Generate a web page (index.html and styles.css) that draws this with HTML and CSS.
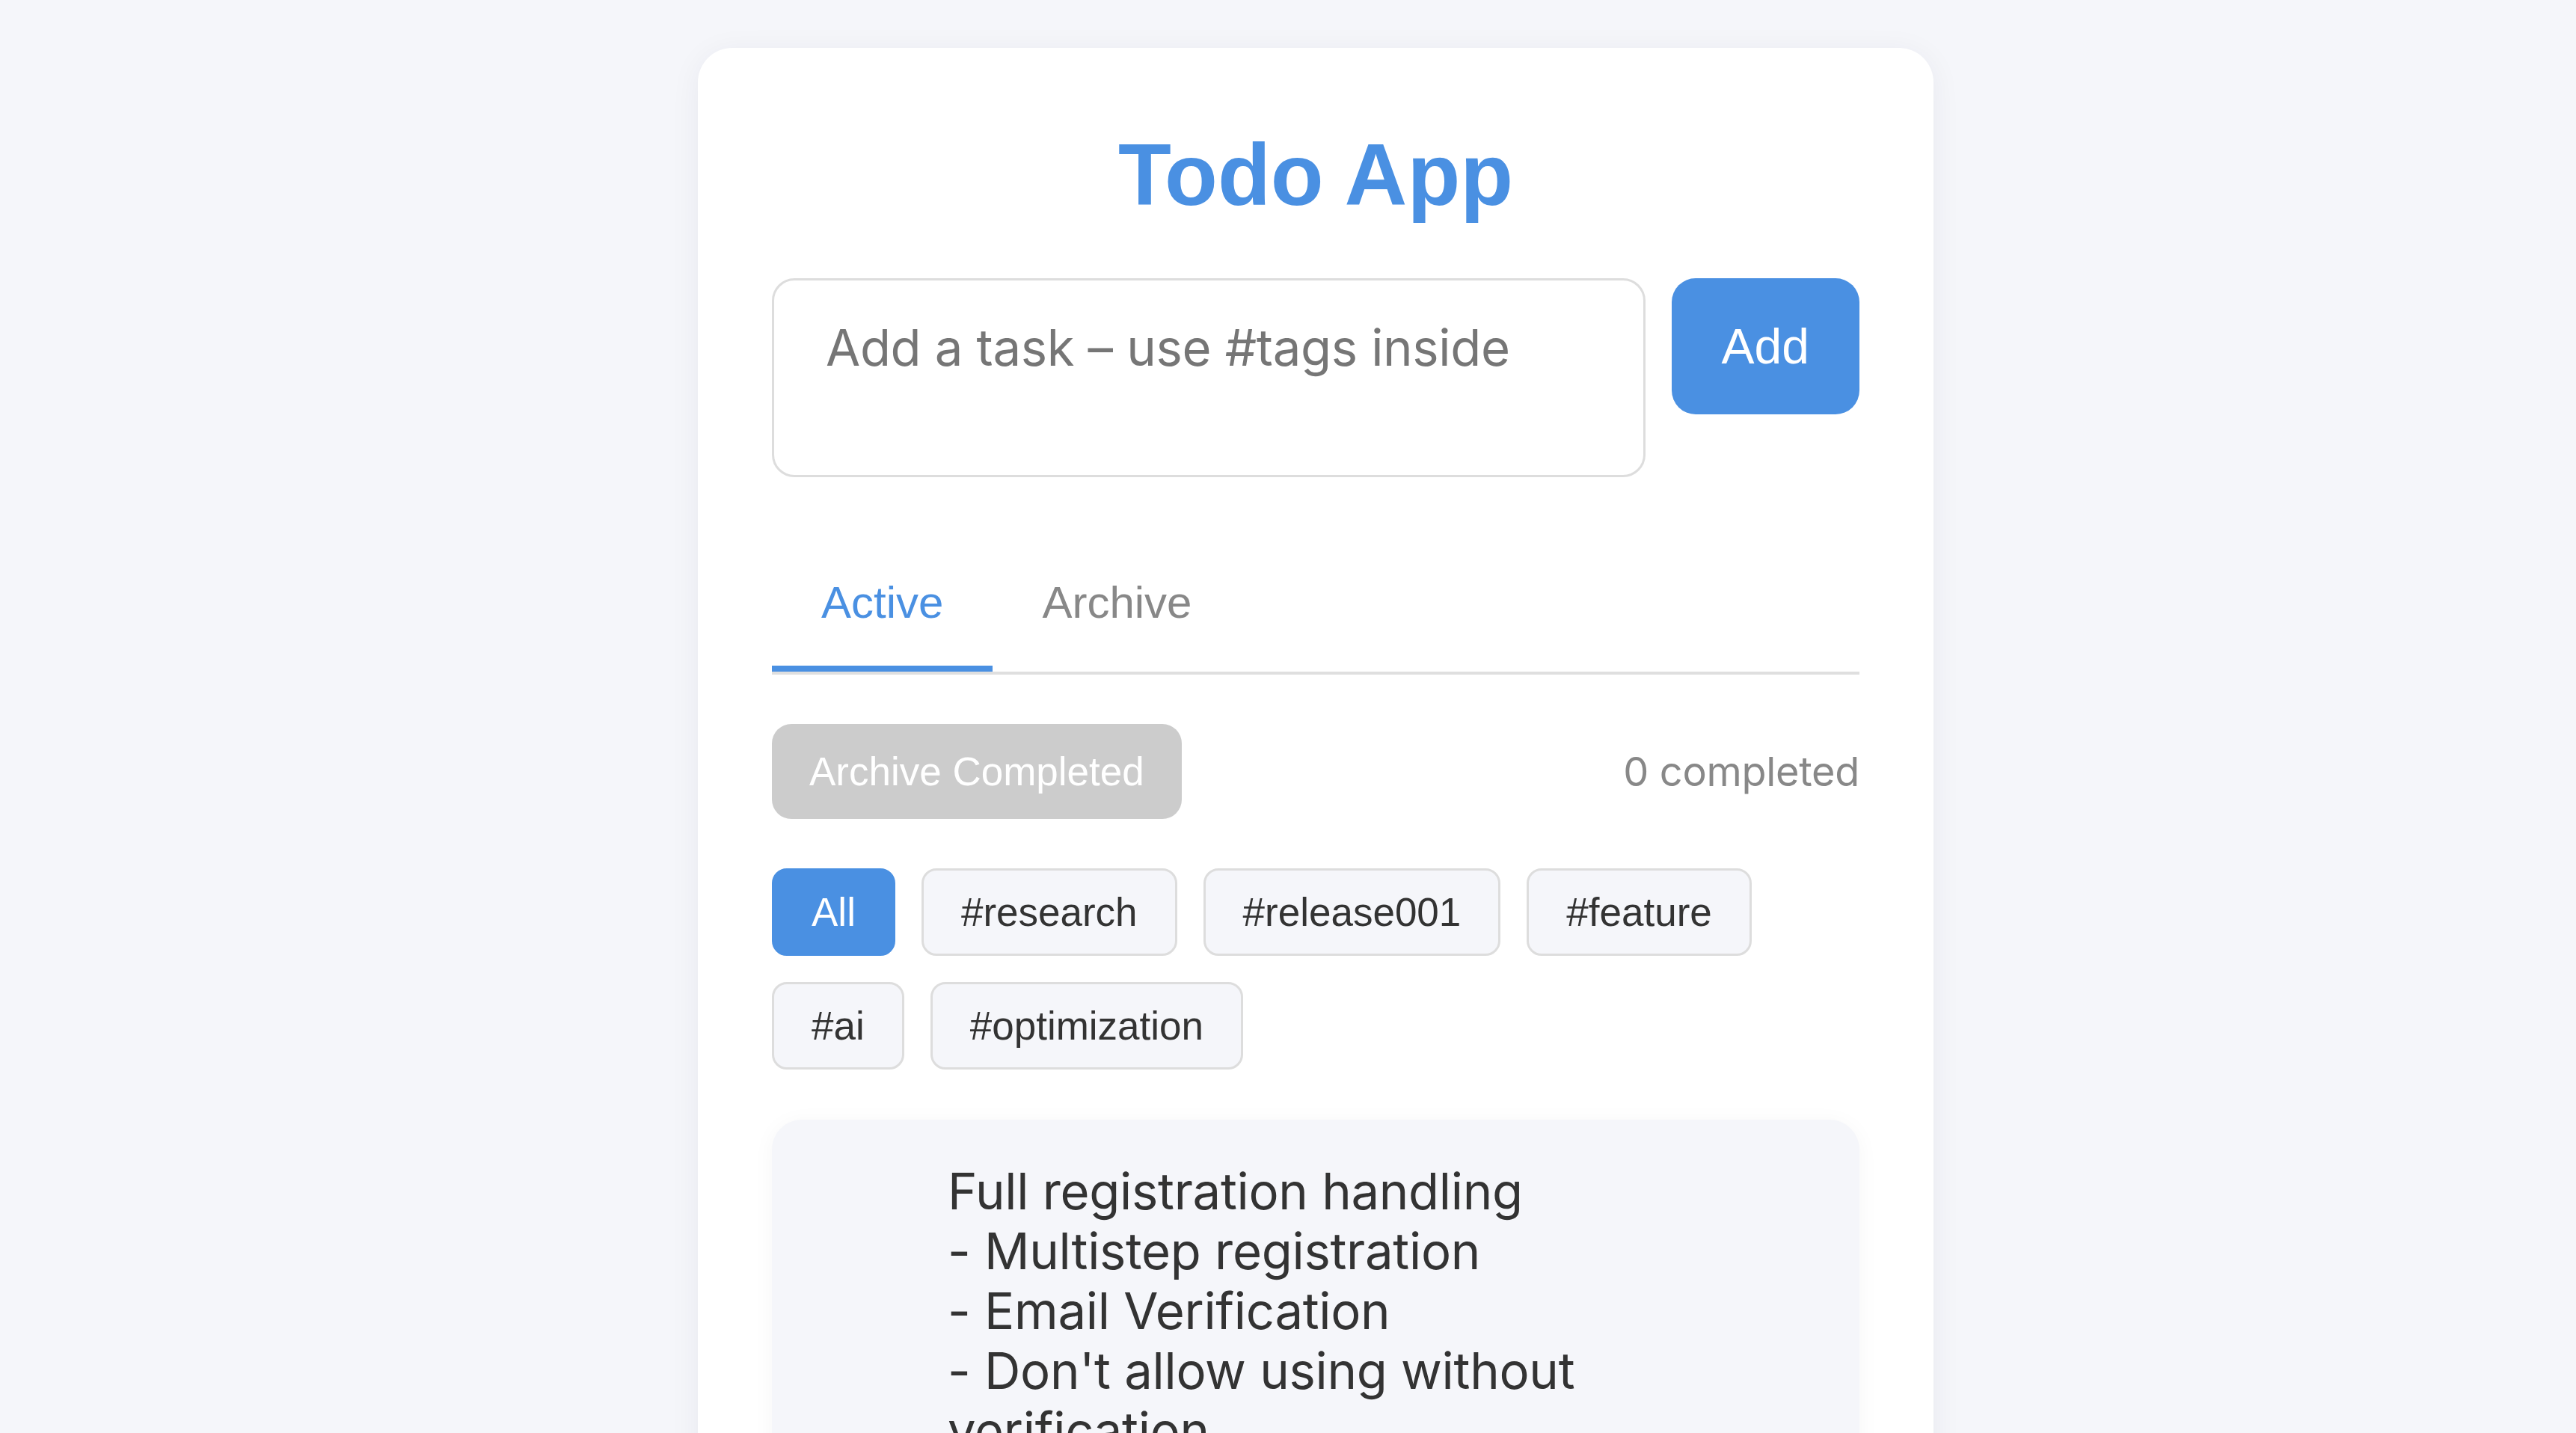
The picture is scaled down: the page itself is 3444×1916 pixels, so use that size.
FILE: index.html
```html
<!DOCTYPE html>
<html lang="en">
<head>
<meta charset="utf-8">
<title>Todo App</title>
<link rel="stylesheet" href="styles.css">
</head>
<body>
<main class="app">
  <h1 class="app-title">Todo App</h1>
  <div class="composer">
    <textarea class="composer-input" placeholder="Add a task – use #tags inside"></textarea>
    <button class="btn-add">Add</button>
  </div>
  <nav class="tabs">
    <button class="tab tab-active">Active</button>
    <button class="tab">Archive</button>
  </nav>
  <div class="toolbar">
    <button class="btn-archive" disabled>Archive Completed</button>
    <span class="count">0 completed</span>
  </div>
  <div class="tag-filter">
    <button class="tag tag-active">All</button>
    <button class="tag">#research</button>
    <button class="tag">#release001</button>
    <button class="tag">#feature</button>
    <button class="tag">#ai</button>
    <button class="tag">#optimization</button>
  </div>
  <ul class="task-list">
    <li class="task">
      <div class="task-text">Full registration handling
- Multistep registration
- Email Verification
- Don't allow using without verification</div>
    </li>
  </ul>
</main>
</body>
</html>
```
FILE: styles.css
```css
* {
  box-sizing: border-box;
}

body {
  margin: 0;
  padding-left: 74px;
  background: #f5f6fa;
  font-family: "Liberation Sans", Arial, sans-serif;
  color: #333;
}

.app {
  width: 1652px;
  margin: 64px auto;
  padding: 99px;
  background: #fff;
  border-radius: 46px;
  box-shadow: 0 6px 40px rgba(20, 30, 60, 0.06);
}

.app-title {
  margin: 4px 0 71px;
  text-align: center;
  font-size: 116px;
  font-weight: 700;
  line-height: normal;
  color: #4a90e2;
}

.composer {
  display: flex;
  align-items: flex-start;
  gap: 35px;
}

.composer-input {
  flex: 1;
  height: 266px;
  padding: 49px 69px;
  border: 3px solid #dddddd;
  border-radius: 30px;
  font-family: "Inter", "Noto Sans", sans-serif;
  font-size: 67px;
  letter-spacing: -0.35px;
  color: #333;
  resize: none;
  outline: none;
  background: #fff;
}

.composer-input::placeholder {
  color: #767676;
}

.btn-add {
  height: 182px;
  padding: 0 67px;
  border: none;
  border-radius: 32px;
  background: #4a90e2;
  color: #fff;
  font-family: inherit;
  font-size: 66px;
}

.tabs {
  display: flex;
  margin-top: 83px;
  border-bottom: 4px solid #dfdfdf;
}

.tab {
  padding: 50px 66px;
  border: none;
  border-bottom: 8px solid transparent;
  background: none;
  font-family: inherit;
  font-size: 60px;
  line-height: normal;
  color: #888;
}

.tab-active {
  color: #4a90e2;
  border-bottom-color: #4a90e2;
}

.toolbar {
  display: flex;
  justify-content: space-between;
  align-items: center;
  margin-top: 66px;
}

.btn-archive {
  padding: 33px 50px;
  border: none;
  border-radius: 26px;
  background: #cccccc;
  color: #fff;
  font-family: inherit;
  font-size: 53px;
  line-height: normal;
}

.count {
  font-family: "Inter", "Noto Sans", sans-serif;
  font-size: 54px;
  letter-spacing: -0.3px;
  color: #888;
}

.tag-filter {
  display: flex;
  flex-wrap: wrap;
  gap: 35px;
  margin-top: 66px;
}

.tag {
  padding: 25px 50px;
  border: 3px solid #dddddd;
  border-radius: 20px;
  background: #f5f6fa;
  color: #333;
  font-family: inherit;
  font-size: 53px;
  line-height: normal;
}

.tag-active {
  background: #4a90e2;
  border-color: #4a90e2;
  color: #fff;
}

.task-list {
  list-style: none;
  margin: 67px 0 0;
  padding: 0;
}

.task {
  padding: 56px 56px 56px 235px;
  border-radius: 40px;
  background: #f5f6fa;
  box-shadow: 0 4px 30px rgba(0, 0, 0, 0.04);
}

.task-text {
  white-space: pre-wrap;
  font-family: "Inter", "Noto Sans", sans-serif;
  font-size: 67px;
  line-height: 80px;
  letter-spacing: -0.3px;
  color: #333;
}
```
